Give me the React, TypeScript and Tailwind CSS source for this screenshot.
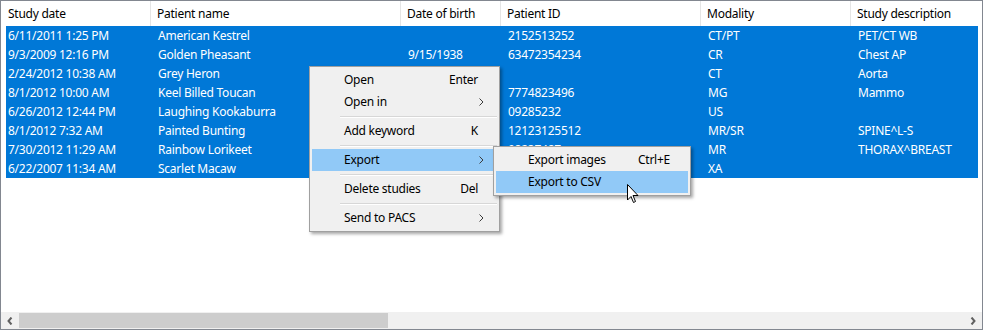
import React from 'react';

type Study = {
  date: string;
  name: string;
  dob: string;
  id: string;
  modality: string;
  desc: string;
};

const studies: Study[] = [
  { date: '6/11/2011 1:25 PM', name: 'American Kestrel', dob: '', id: '2152513252', modality: 'CT/PT', desc: 'PET/CT WB' },
  { date: '9/3/2009 12:16 PM', name: 'Golden Pheasant', dob: '9/15/1938', id: '63472354234', modality: 'CR', desc: 'Chest AP' },
  { date: '2/24/2012 10:38 AM', name: 'Grey Heron', dob: '', id: '', modality: 'CT', desc: 'Aorta' },
  { date: '8/1/2012 10:00 AM', name: 'Keel Billed Toucan', dob: '', id: '7774823496', modality: 'MG', desc: 'Mammo' },
  { date: '6/26/2012 12:44 PM', name: 'Laughing Kookaburra', dob: '', id: '09285232', modality: 'US', desc: '' },
  { date: '8/1/2012 7:32 AM', name: 'Painted Bunting', dob: '', id: '12123125512', modality: 'MR/SR', desc: 'SPINE^L-S' },
  { date: '7/30/2012 11:29 AM', name: 'Rainbow Lorikeet', dob: '', id: '98237487', modality: 'MR', desc: 'THORAX^BREAST' },
  { date: '6/22/2007 11:34 AM', name: 'Scarlet Macaw', dob: '', id: '', modality: 'XA', desc: '' },
];

const Chevron = () => (
  <svg width="5" height="8" viewBox="0 0 5 8" className="shrink-0">
    <path d="M0.5 0.5 L4 4 L0.5 7.5" fill="none" stroke="#3c3c3c" strokeWidth="1" />
  </svg>
);

const MenuItem = ({ label, shortcut, sub, active }: { label: string; shortcut?: string; sub?: boolean; active?: boolean }) => (
  <div className={`h-[22px] flex items-center pl-[32px] pr-[13px] ${active ? 'bg-[#91c9f7]' : ''}`}>
    <span className="flex-1">{label}</span>
    {shortcut && <span className="mr-[6px]">{shortcut}</span>}
    {sub && <Chevron />}
  </div>
);

const Separator = () => (
  <div className="h-[7px] flex items-center pl-[28px]">
    <div className="w-full border-t border-[#d7d7d7] border-b border-b-white" />
  </div>
);

export default function App() {
  return (
    <div className="relative w-[983px] h-[330px] bg-white border border-[#828790] overflow-hidden text-[12px] tracking-[-0.25px] text-black font-['Noto_Sans',sans-serif] leading-none flex flex-col">
      {/* Header */}
      <div className="flex h-[25px] shrink-0">
        <div className="w-[150px] pl-[7px] flex items-center border-r border-[#e5e5e5]">Study date</div>
        <div className="w-[250px] pl-[6px] flex items-center border-r border-[#e5e5e5]">Patient name</div>
        <div className="w-[100px] pl-[6px] flex items-center border-r border-[#e5e5e5]">Date of birth</div>
        <div className="w-[200px] pl-[6px] flex items-center border-r border-[#e5e5e5]">Patient ID</div>
        <div className="w-[150px] pl-[6px] flex items-center border-r border-[#e5e5e5]">Modality</div>
        <div className="flex-1 pl-[6px] flex items-center">Study description</div>
      </div>

      {/* Rows */}
      <div className="flex-1">
        {studies.map((s) => (
          <div key={s.date} className="ml-[5px] w-[972px] h-[19px] flex items-center bg-[#0078d7] text-white">
            <div className="w-[145px] pl-[2px]">{s.date}</div>
            <div className="w-[250px] pl-[7px]">{s.name}</div>
            <div className="w-[100px] pl-[7px]">{s.dob}</div>
            <div className="w-[200px] pl-[7px]">{s.id}</div>
            <div className="w-[150px] pl-[7px]">{s.modality}</div>
            <div className="flex-1 pl-[7px]">{s.desc}</div>
          </div>
        ))}
      </div>

      {/* Horizontal scrollbar */}
      <div className="h-[17px] shrink-0 flex bg-[#f0f0f0]">
        <div className="w-[18px] flex items-center justify-center">
          <svg width="6" height="8" viewBox="0 0 6 8">
            <path d="M4.5 0.5 L1.5 4 L4.5 7.5" fill="none" stroke="#606060" strokeWidth="2" />
          </svg>
        </div>
        <div className="w-[369px] my-[1px] bg-[#cdcdcd]" />
        <div className="flex-1" />
        <div className="w-[18px] flex items-center justify-center">
          <svg width="6" height="8" viewBox="0 0 6 8">
            <path d="M1.5 0.5 L4.5 4 L1.5 7.5" fill="none" stroke="#606060" strokeWidth="2" />
          </svg>
        </div>
      </div>

      {/* Context menu */}
      <div className="absolute left-[308px] top-[65px] w-[191px] bg-[#f0f0f0] border border-[#a0a0a0] p-[2px] shadow-[2px_2px_3px_rgba(0,0,0,0.35)]">
        <MenuItem label="Open" shortcut="Enter" />
        <MenuItem label="Open in" sub />
        <Separator />
        <MenuItem label="Add keyword" shortcut="K" />
        <Separator />
        <MenuItem label="Export" sub active />
        <Separator />
        <MenuItem label="Delete studies" shortcut="Del" />
        <Separator />
        <MenuItem label="Send to PACS" sub />
      </div>

      {/* Submenu */}
      <div className="absolute left-[492px] top-[145px] w-[198px] bg-[#f0f0f0] border border-[#a0a0a0] p-[2px] shadow-[2px_2px_3px_rgba(0,0,0,0.35)]">
        <div className="h-[22px] flex items-center pl-[32px] pr-[18px]">
          <span className="flex-1">Export images</span>
          <span>Ctrl+E</span>
        </div>
        <div className="h-[22px] flex items-center pl-[32px] pr-[18px] bg-[#91c9f7]">
          <span className="flex-1">Export to CSV</span>
        </div>
      </div>

      {/* Mouse cursor */}
      <svg className="absolute left-[626px] top-[183px]" width="13" height="20" viewBox="0 0 13 20">
        <path
          d="M0.5 0.5 L0.5 16 L4 12.5 L6.5 18.5 L8.5 17.5 L6 11.5 L11 11.5 Z"
          fill="white"
          stroke="black"
          strokeWidth="1"
          strokeLinejoin="miter"
        />
      </svg>
    </div>
  );
}
